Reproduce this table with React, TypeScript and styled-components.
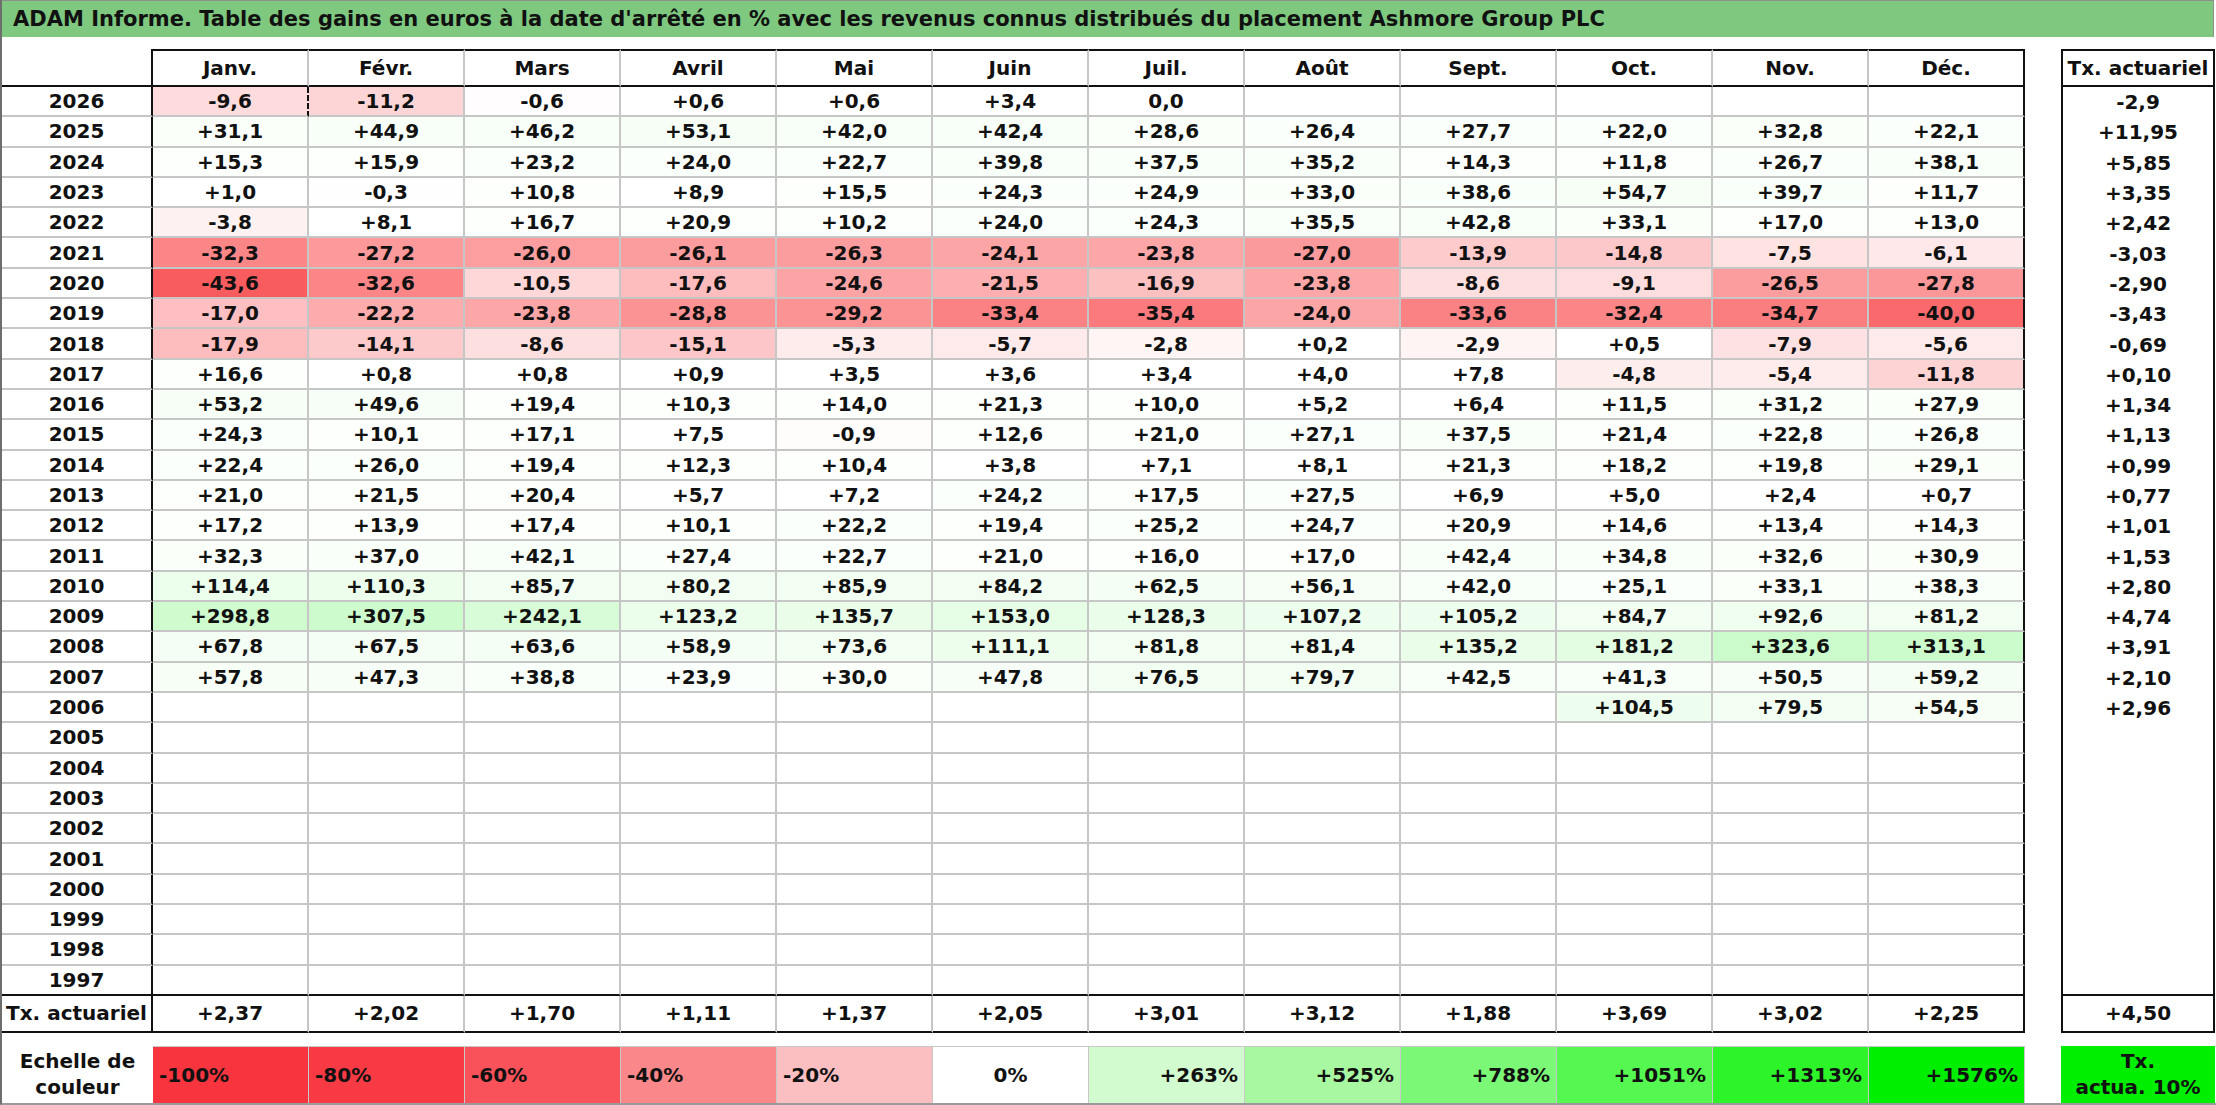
import React from 'react';
import styled, { createGlobalStyle, css } from 'styled-components';

type Edge = 'gray' | 'black' | 'dash' | 'none';

const GlobalStyle = createGlobalStyle`
  html, body {
    margin: 0;
    padding: 0;
    background: #ffffff;
  }
  body {
    font-family: "DejaVu Sans", "Liberation Sans", sans-serif;
    color: #111111;
  }
`;

const edge = (kind: Edge = 'none') => {
  switch (kind) {
    case 'gray':
      return '2px solid #c6c6c6';
    case 'black':
      return '2px solid #111111';
    case 'dash':
      return '2px dashed #111111';
    default:
      return '0';
  }
};

const Page = styled.div`
  width: 2216px;
  height: 1105px;
  box-sizing: border-box;
  overflow: hidden;
  display: flex;
  flex-direction: column;
  border-left: 2px solid #6e6e6e;
  border-bottom: 2px solid #9a9a9a;
`;

const TitleBar = styled.div`
  height: 37px;
  width: 2212px;
  box-sizing: border-box;
  display: flex;
  align-items: center;
  padding-left: 11px;
  background: #7ec87f;
  border-top: 1px solid #8f8f8f;
  border-right: 1px solid #8f8f8f;
  font-size: 21px;
  font-weight: 700;
  white-space: nowrap;
  margin-bottom: 12px;
`;

const Sheet = styled.div`
  display: grid;
  grid-template-columns: 151px repeat(12, 156px) 36px 154px;
  grid-template-rows: 38px repeat(30, 30.3px) 37px 13px 57px;
`;

const Cell = styled.div<{
  $bg?: string;
  $top?: Edge;
  $right?: Edge;
  $bottom?: Edge;
  $left?: Edge;
}>`
  box-sizing: border-box;
  display: flex;
  align-items: center;
  justify-content: center;
  font-size: 20px;
  font-weight: 700;
  white-space: nowrap;
  background: ${(p) => p.$bg ?? '#ffffff'};
  border-top: ${(p) => edge(p.$top)};
  border-right: ${(p) => edge(p.$right)};
  border-bottom: ${(p) => edge(p.$bottom)};
  border-left: ${(p) => edge(p.$left)};
`;

const Spacer = styled.div`
  grid-column: 1 / -1;
`;

const LegendLabel = styled.div`
  display: flex;
  align-items: center;
  justify-content: center;
  text-align: center;
  font-size: 20px;
  font-weight: 700;
  line-height: 26px;
`;

const Swatch = styled.div<{ $bg: string; $align: 'left' | 'center' | 'right' }>`
  box-sizing: border-box;
  display: flex;
  align-items: center;
  padding: 0 6px;
  font-size: 20px;
  font-weight: 700;
  background: ${(p) => p.$bg};
  border-top: 1px solid #c8c8c8;
  border-right: 1px solid #c8c8c8;
  ${(p) =>
    p.$align === 'left'
      ? css`justify-content: flex-start;`
      : p.$align === 'right'
      ? css`justify-content: flex-end;`
      : css`justify-content: center;`}
`;

const TxSwatch = styled.div`
  display: flex;
  align-items: center;
  justify-content: center;
  text-align: center;
  background: #00ef00;
  font-size: 20px;
  font-weight: 700;
  line-height: 26px;
`;

const MONTHS = ['Janv.', 'Févr.', 'Mars', 'Avril', 'Mai', 'Juin', 'Juil.', 'Août', 'Sept.', 'Oct.', 'Nov.', 'Déc.'];

const RAW: [number, string, string][] = [
  [2026, '-9,6 -11,2 -0,6 +0,6 +0,6 +3,4 0,0 . . . . .', '-2,9'],
  [2025, '+31,1 +44,9 +46,2 +53,1 +42,0 +42,4 +28,6 +26,4 +27,7 +22,0 +32,8 +22,1', '+11,95'],
  [2024, '+15,3 +15,9 +23,2 +24,0 +22,7 +39,8 +37,5 +35,2 +14,3 +11,8 +26,7 +38,1', '+5,85'],
  [2023, '+1,0 -0,3 +10,8 +8,9 +15,5 +24,3 +24,9 +33,0 +38,6 +54,7 +39,7 +11,7', '+3,35'],
  [2022, '-3,8 +8,1 +16,7 +20,9 +10,2 +24,0 +24,3 +35,5 +42,8 +33,1 +17,0 +13,0', '+2,42'],
  [2021, '-32,3 -27,2 -26,0 -26,1 -26,3 -24,1 -23,8 -27,0 -13,9 -14,8 -7,5 -6,1', '-3,03'],
  [2020, '-43,6 -32,6 -10,5 -17,6 -24,6 -21,5 -16,9 -23,8 -8,6 -9,1 -26,5 -27,8', '-2,90'],
  [2019, '-17,0 -22,2 -23,8 -28,8 -29,2 -33,4 -35,4 -24,0 -33,6 -32,4 -34,7 -40,0', '-3,43'],
  [2018, '-17,9 -14,1 -8,6 -15,1 -5,3 -5,7 -2,8 +0,2 -2,9 +0,5 -7,9 -5,6', '-0,69'],
  [2017, '+16,6 +0,8 +0,8 +0,9 +3,5 +3,6 +3,4 +4,0 +7,8 -4,8 -5,4 -11,8', '+0,10'],
  [2016, '+53,2 +49,6 +19,4 +10,3 +14,0 +21,3 +10,0 +5,2 +6,4 +11,5 +31,2 +27,9', '+1,34'],
  [2015, '+24,3 +10,1 +17,1 +7,5 -0,9 +12,6 +21,0 +27,1 +37,5 +21,4 +22,8 +26,8', '+1,13'],
  [2014, '+22,4 +26,0 +19,4 +12,3 +10,4 +3,8 +7,1 +8,1 +21,3 +18,2 +19,8 +29,1', '+0,99'],
  [2013, '+21,0 +21,5 +20,4 +5,7 +7,2 +24,2 +17,5 +27,5 +6,9 +5,0 +2,4 +0,7', '+0,77'],
  [2012, '+17,2 +13,9 +17,4 +10,1 +22,2 +19,4 +25,2 +24,7 +20,9 +14,6 +13,4 +14,3', '+1,01'],
  [2011, '+32,3 +37,0 +42,1 +27,4 +22,7 +21,0 +16,0 +17,0 +42,4 +34,8 +32,6 +30,9', '+1,53'],
  [2010, '+114,4 +110,3 +85,7 +80,2 +85,9 +84,2 +62,5 +56,1 +42,0 +25,1 +33,1 +38,3', '+2,80'],
  [2009, '+298,8 +307,5 +242,1 +123,2 +135,7 +153,0 +128,3 +107,2 +105,2 +84,7 +92,6 +81,2', '+4,74'],
  [2008, '+67,8 +67,5 +63,6 +58,9 +73,6 +111,1 +81,8 +81,4 +135,2 +181,2 +323,6 +313,1', '+3,91'],
  [2007, '+57,8 +47,3 +38,8 +23,9 +30,0 +47,8 +76,5 +79,7 +42,5 +41,3 +50,5 +59,2', '+2,10'],
  [2006, '. . . . . . . . . +104,5 +79,5 +54,5', '+2,96'],
];

const ROWS = [
  ...RAW.map(([year, vals, tx]) => ({
    year,
    vals: vals.split(' ').map((v) => (v === '.' ? '' : v)),
    tx,
  })),
  ...Array.from({ length: 9 }, (_, i) => ({ year: 2005 - i, vals: Array(12).fill(''), tx: '' })),
];

const TOTALS = ['+2,37', '+2,02', '+1,70', '+1,11', '+1,37', '+2,05', '+3,01', '+3,12', '+1,88', '+3,69', '+3,02', '+2,25'];

const LEGEND: { label: string; bg: string; align: 'left' | 'center' | 'right' }[] = [
  { label: '-100%', bg: '#f8343e', align: 'left' },
  { label: '-80%', bg: '#f83a44', align: 'left' },
  { label: '-60%', bg: '#f9525a', align: 'left' },
  { label: '-40%', bg: '#fa878a', align: 'left' },
  { label: '-20%', bg: '#fbbfc1', align: 'left' },
  { label: '0%', bg: '#ffffff', align: 'center' },
  { label: '+263%', bg: '#d2fcd0', align: 'right' },
  { label: '+525%', bg: '#a8f8a2', align: 'right' },
  { label: '+788%', bg: '#7cf877', align: 'right' },
  { label: '+1051%', bg: '#55f850', align: 'right' },
  { label: '+1313%', bg: '#2df329', align: 'right' },
  { label: '+1576%', bg: '#00ee00', align: 'right' },
];

const mix = (target: number[], t: number) => {
  const c = target.map((ch) => Math.round(255 + (ch - 255) * t));
  return `rgb(${c[0]}, ${c[1]}, ${c[2]})`;
};

// same idea as the spreadsheet colour scale: white at 0, red below, green above
const cellColor = (s: string) => {
  if (!s) return '#ffffff';
  const v = parseFloat(s.replace(',', '.'));
  if (v < 0) return mix([248, 60, 64], Math.min(1, -v / 52));
  return mix([0, 236, 0], Math.min(1, v / 1576));
};

const App = () => {
  const last = ROWS.length - 1;
  return (
    <Page>
      <GlobalStyle />
      <TitleBar>
        ADAM Informe. Table des gains en euros à la date d'arrêté en % avec les revenus connus distribués du placement Ashmore Group PLC
      </TitleBar>
      <Sheet>
        <Cell $right="black" $bottom="black" />
        {MONTHS.map((m, i) => (
          <Cell key={m} $top="black" $bottom="black" $right={i === 11 ? 'black' : 'gray'}>
            {m}
          </Cell>
        ))}
        <Cell />
        <Cell $top="black" $left="black" $right="black" $bottom="black">
          Tx. actuariel
        </Cell>

        {ROWS.map((row, r) => {
          const bottom: Edge = r === last ? 'black' : 'gray';
          return (
            <React.Fragment key={row.year}>
              <Cell $right="black" $bottom={bottom}>
                {row.year}
              </Cell>
              {row.vals.map((v, i) => (
                <Cell
                  key={i}
                  $bg={cellColor(v)}
                  $bottom={bottom}
                  $right={i === 11 ? 'black' : r === 0 && i === 0 ? 'dash' : 'gray'}
                >
                  {v}
                </Cell>
              ))}
              <Cell />
              <Cell $left="black" $right="black" $bottom={r === last ? 'black' : 'none'}>
                {row.tx}
              </Cell>
            </React.Fragment>
          );
        })}

        <Cell $right="black" $bottom="black">
          Tx. actuariel
        </Cell>
        {TOTALS.map((t, i) => (
          <Cell key={i} $bottom="black" $right={i === 11 ? 'black' : 'gray'}>
            {t}
          </Cell>
        ))}
        <Cell />
        <Cell $left="black" $right="black" $bottom="black">
          +4,50
        </Cell>

        <Spacer />

        <LegendLabel>
          Echelle de
          <br />
          couleur
        </LegendLabel>
        {LEGEND.map((l) => (
          <Swatch key={l.label} $bg={l.bg} $align={l.align}>
            {l.label}
          </Swatch>
        ))}
        <div />
        <TxSwatch>
          Tx.
          <br />
          actua. 10%
        </TxSwatch>
      </Sheet>
    </Page>
  );
};

export default App;
